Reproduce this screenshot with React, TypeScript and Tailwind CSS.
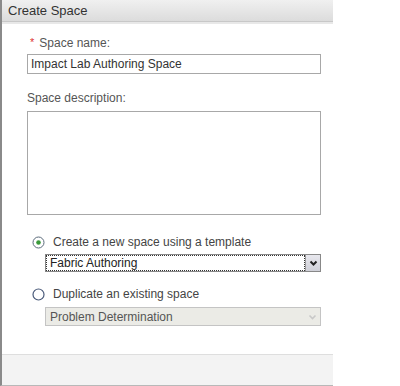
import React from "react";

export default function App() {
  return (
    <div className="w-[400px] h-[386px] bg-white" style={{ fontFamily: '"Liberation Sans", Arial, sans-serif' }}>
      <div className="w-[333px] h-[386px] flex flex-col border-l-2 border-[#8a8a8a] border-b border-b-[#b8b8b8]">
        <div className="h-[22px] bg-gradient-to-b from-[#f0f0f0] to-[#dcdcdc] border-b border-[#c8c8c8] flex items-center pl-[6px] text-[13px] text-[#333]">
          Create Space
        </div>
        <div className="h-[2px] bg-[#e8e8e8]" />
        <div className="flex-1 flex flex-col pl-[25px] pr-[10px]">
          <div className="mt-[11px] ml-[3px] text-[12px] text-[#555] flex items-center h-[15px]">
            <span className="text-[#d33] mr-[5px] text-[11px]">*</span>Space name:
          </div>
          <div className="mt-[4px] w-[294px] h-[20px] border border-[#a8a8a8] flex items-center px-[3px] text-[12px] text-[#333]">
            Impact Lab Authoring Space
          </div>
          <div className="mt-[16px] text-[12px] text-[#555] h-[15px] flex items-center">Space description:</div>
          <div className="mt-[6px] w-[294px] h-[104px] border border-[#a8a8a8]" />
          <div className="mt-[19px] flex items-center h-[16px] pl-[5px] text-[12px] text-[#444]">
            <svg width="13" height="13" viewBox="0 0 13 13" className="mr-[8px]">
              <circle cx="6.5" cy="6.5" r="5.5" fill="#fff" stroke="#5a6a7a" strokeWidth="1" />
              <circle cx="6.5" cy="6.5" r="2.3" fill="#3a9a3a" />
            </svg>
            Create a new space using a template
          </div>
          <div className="mt-[4px] ml-[18px] w-[276px] h-[18px] border border-[#888] flex items-center text-[12px] text-[#222]">
            <div className="flex-1 h-full border border-dotted border-[#333] flex items-center pl-[3px]">Fabric Authoring</div>
            <div className="w-[15px] h-full bg-gradient-to-b from-[#e8e8ee] to-[#cfd0d8] border-l border-[#999] flex items-center justify-center">
              <svg width="9" height="6" viewBox="0 0 9 6">
                <path d="M1.5 1.5 L4.5 4.5 L7.5 1.5" stroke="#222" strokeWidth="2" fill="none" />
              </svg>
            </div>
          </div>
          <div className="mt-[14px] flex items-center h-[16px] pl-[5px] text-[12px] text-[#444]">
            <svg width="13" height="13" viewBox="0 0 13 13" className="mr-[8px]">
              <circle cx="6.5" cy="6.5" r="5.5" fill="#fff" stroke="#4a5a7a" strokeWidth="1.2" />
            </svg>
            Duplicate an existing space
          </div>
          <div className="mt-[5px] ml-[18px] w-[276px] h-[19px] border border-[#c4c4c4] bg-[#ebebe6] flex items-center text-[12px] text-[#555]">
            <div className="flex-1 pl-[4px]">Problem Determination</div>
            <div className="w-[15px] h-full flex items-center justify-center">
              <svg width="9" height="6" viewBox="0 0 9 6">
                <path d="M1.5 1.5 L4.5 4.5 L7.5 1.5" stroke="#c8c8c8" strokeWidth="1.6" fill="none" />
              </svg>
            </div>
          </div>
        </div>
        <div className="h-[31px] bg-[#f3f3f3] border-t border-[#dedede]" />
      </div>
    </div>
  );
}
